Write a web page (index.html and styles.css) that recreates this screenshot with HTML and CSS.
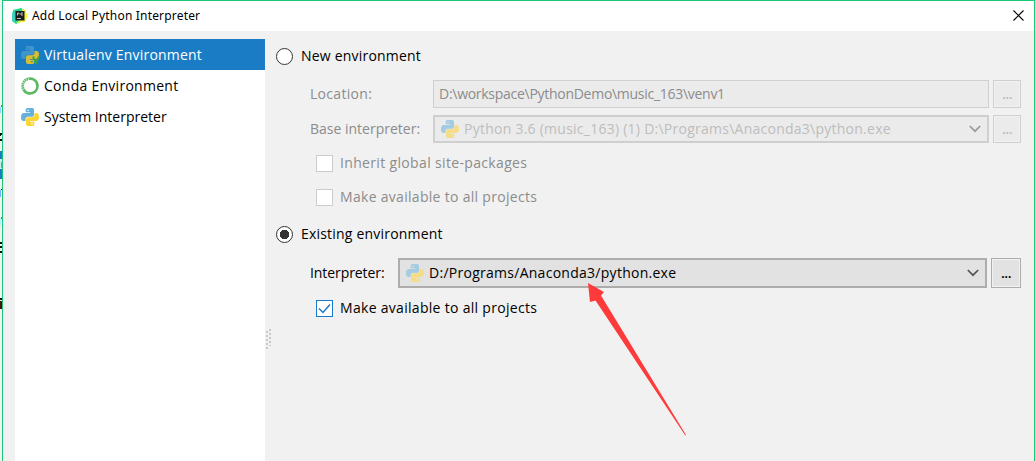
FILE: index.html
```html
<!DOCTYPE html>
<html lang="en">
<head>
<meta charset="utf-8">
<title>Add Local Python Interpreter</title>
<link rel="stylesheet" href="styles.css">
</head>
<body>
<svg class="defs" width="0" height="0" aria-hidden="true">
  <symbol id="python" viewBox="0 0 18 18">
    <path class="py-top" d="M6.2 0h5.1C12.700 0 13 1 13 2.200V6.500C13 8 12 8.800 10.700 8.800H7C5.300 8.800 4.500 9.800 4.500 11v2H2.500C.9 13 0 11.500 0 9.200 0 6.500 1 5 3 5H9V4.300H4.700V2C4.700.7 5.100 0 6.200 0Z"/>
    <path class="py-bottom" d="M11.800 18H6.700C5.300 18 5 17 5 15.800V11.500C5 10 6 9.200 7.300 9.200H11C12.700 9.200 13.500 8.200 13.500 7V5h2C17.100 5 18 6.500 18 8.800 18 11.500 17 13 15 13H9v.7h4.300V16C13.300 17.300 12.900 18 11.800 18Z"/>
    <circle class="py-eye" cx="7" cy="2.300" r=".8"/><circle class="py-eye" cx="11" cy="15.700" r=".8"/>
  </symbol>
  <symbol id="chevron" viewBox="0 0 12 8"><path d="M.8 1L6 6.200 11.200 1" fill="none" stroke="currentColor" stroke-width="1.700"/></symbol>
</svg>
<div class="screen">
  <svg class="backdrop" width="2" height="461" viewBox="0 0 2 461" shape-rendering="crispEdges">
    <path fill="#111" d="M0 133h2v2H0zM0 135h1v1H0zM0 139h2v2H0zM1 189h1v1H1zM0 242h2v2H0zM0 246h2v2H0zM0 251h2v2H0zM0 298h2v2H0z"/>
    <path fill="#1a7cc4" d="M0 151h2v8H0zM0 169h2v10H0z"/><path fill="#d5e6f3" d="M0 159h2v10H0z"/><path fill="#c08080" d="M1 162h1v6H1z"/>
    <path fill="#6eb5ff" d="M0 190h1v7H0z"/><path fill="#8ad4ff" d="M0 107h1v6H0z"/><path fill="#aef3f7" d="M0 218h1v7H0z"/>
    <path fill="#a66a20" d="M1 105h1v2H1zM1 217h1v2H1z"/>
    <path fill="#501010" d="M0 301h2v8H0z"/>
  </svg>
  <div class="dialog">
    <header class="titlebar">
      <svg class="app-icon" width="16" height="16" viewBox="0 0 16 16"><path fill="#21d789" d="M1 2L9 0l5 3-3 10-7 3-4-3z"/><path fill="#fcf84a" d="M10 1l3 1 3 6-3 6-9 1 7-5z"/><path fill="#3fd0c0" d="M0 5l3-2v10H0z"/><path fill="#1b1b1b" d="M3.500 3h9v9.500h-9z"/><path stroke="#bbb" fill="none" d="M5.500 7.500V5h1.500v1.500M11 5H9v2h2M5 10.500h4"/></svg>
      <span class="title">Add Local Python Interpreter</span>
      <svg class="close" width="11" height="11" viewBox="0 0 11 11"><path d="M.5.5l10 10M10.500.5l-10 10" stroke="#000" stroke-width="1.100"/></svg>
    </header>
    <div class="content">
      <nav class="sidebar">
        <div class="item selected"><span class="item-icon"><svg class="py vivid dark" width="18" height="18"><use href="#python"/></svg><svg class="venv" width="8" height="8" viewBox="0 0 8 8"><path d="M1 .5l3 6.500L7 .5" fill="none" stroke="#42a536" stroke-width="1.900"/></svg></span><span class="t-venv">Virtualenv Environment</span></div>
        <div class="item"><svg width="18" height="18" viewBox="0 0 18 18" fill="none" stroke="#5fb865"><path d="M9 1.600A7.400 7.400 0 1 1 2.500 12.500" stroke-width="2.800"/><path d="M9 1.600A7.400 7.400 0 0 0 2.500 12.500" stroke-width="2.800" stroke-dasharray="1.500 .6"/></svg><span class="t-conda">Conda Environment</span></div>
        <div class="item"><svg class="py vivid" width="18" height="18"><use href="#python"/></svg><span class="t-system">System Interpreter</span></div>
      </nav>
      <svg class="grip" width="6" height="20" viewBox="0 0 6 20" fill="#c9c9c9"><path d="M1 2h2v2H1zM1 6h2v2H1zM1 10h2v2H1zM1 14h2v2H1zM1 18h2v2H1zM4 0h2v2H4zM4 4h2v2H4zM4 8h2v2H4zM4 12h2v2H4zM4 16h2v1H4z"/></svg>
      <main class="form">
        <div class="choice"><span class="radio"></span><span class="t-new">New environment</span></div>
        <div class="row location disabled"><span class="label wide"><span class="t-loc">Location:</span></span><div class="input"><span class="t-path">D:\workspace\PythonDemo\music_163\venv1</span></div><div class="browse">...</div></div>
        <div class="row base disabled"><span class="label wide"><span class="t-base">Base interpreter:</span></span><div class="combo"><svg class="py" width="18" height="18"><use href="#python"/></svg><span class="t-py">Python 3.6 (music_163) (1) D:\Programs\Anaconda3\python.exe</span><svg class="arrow" width="12" height="8"><use href="#chevron"/></svg></div><div class="browse">...</div></div>
        <div class="check inherit disabled"><span class="box"></span><span class="t-inherit">Inherit global site-packages</span></div>
        <div class="check share disabled"><span class="box"></span><span class="t-make">Make available to all projects</span></div>
        <div class="choice existing"><span class="radio on"></span><span class="t-exist">Existing environment</span></div>
        <div class="row interp"><span class="label"><span class="t-int">Interpreter:</span></span><div class="combo"><svg class="py" width="18" height="18"><use href="#python"/></svg><span class="t-exe">D:/Programs/Anaconda3/python.exe</span><svg class="arrow" width="12" height="8"><use href="#chevron"/></svg></div><div class="browse">...</div></div>
        <div class="check active"><span class="box"><svg width="13" height="11" viewBox="0 0 13 11"><path d="M1 5.500l4 4L12 1.500" fill="none" stroke="#1979ca" stroke-width="1.500"/></svg></span><span class="t-make">Make available to all projects</span></div>
      </main>
    </div>
  </div>
  <svg class="pointer" width="100" height="155" viewBox="0 0 100 155"><path fill="#ff3a3a" d="M0 0l16 9-3 3.500L98 152l-.7.5L7.500 17.500 2 19z"/></svg>
</div>
</body>
</html>
```
FILE: styles.css
```css
* { box-sizing: border-box; }
body { margin: 0; font: 14px/18px "Open Sans", "Noto Sans", sans-serif; color: #000; background: #f1f1f1; white-space: nowrap; }
.defs { position: absolute; }
.screen { position: relative; display: flex; width: 1035px; height: 461px; overflow: hidden; }
.backdrop { flex: none; }
.dialog { flex: 1; display: flex; flex-direction: column; border: 1px solid #1bc877; border-bottom: 0; }
.titlebar { height: 30px; flex: none; display: flex; align-items: center; padding: 0 9px; background: #fff; font: 12px/16px "Noto Sans", sans-serif; }
.title { margin-left: 4px; letter-spacing: .18px; }
.close { margin-left: auto; margin-right: 1px; margin-top: -2px; }
.content { flex: 1; display: flex; padding-left: 12px; background: #f1f1f1; }
.sidebar { width: 250px; margin-top: 8px; background: #fff; }
.item { height: 31px; display: flex; align-items: center; gap: 5px; padding-left: 6px; }
.item.selected { background: #1a7cc4; color: #fff; }
.item-icon { position: relative; display: flex; }
.venv { position: absolute; right: -1px; bottom: 0; }
.grip { width: 6px; margin-top: 298px; }
.form { flex: 1; padding: 16px 13px 0 5px; }
.py { flex: none; --top: #a3cce2; --bottom: #f5dd88; --eye: #e3e3e3; }
.py.vivid { --top: #65b1d9; --bottom: #fcd535; --eye: #fff; }
.py.dark { --top: #4095cc; --bottom: #d5bd35; --eye: #1a7cc4; }
.py-top { fill: var(--top); }
.py-bottom { fill: var(--bottom); }
.py-eye { fill: var(--eye); }
.choice { height: 18px; display: flex; align-items: center; gap: 8px; }
.existing { margin-top: 19px; }
.radio { width: 17px; height: 17px; border: 1.5px solid #333; border-radius: 50%; background: #fff; }
.radio.on { background: radial-gradient(circle, #333 0 4.500px, #fff 5px); }
.row { display: flex; align-items: center; margin-left: 34px; height: 28px; }
.location { margin-top: 15px; }
.base { margin-top: 7px; }
.interp { height: 30px; margin-top: 15px; }
.label { width: 88px; flex: none; }
.label.wide { width: 123px; }
.input { flex: 1; height: 28px; display: flex; align-items: center; border: 1px solid #cfcfcf; padding-left: 5px; background: #ebebeb; }
.combo { flex: 1; height: 100%; display: flex; align-items: center; gap: 5px; padding: 0 6px; border: 2px solid #adadad; background: #e2e2e2; }
.arrow { margin-left: auto; color: #555; }
.browse { width: 30px; height: 100%; display: flex; align-items: center; justify-content: center; margin-left: 4px; border: 1px solid #adadad; box-shadow: inset 0 0 0 1px #f1f1f1; background: #e2e2e2; font-weight: 600; letter-spacing: -.5px; }
.check { display: flex; align-items: center; gap: 7px; height: 17px; margin-left: 40px; }
.check .t-make, .check .t-inherit { margin-top: -2px; }
.box { display: flex; align-items: center; justify-content: center; width: 17px; height: 17px; border: 1px solid #ccc; background: #fff; }
.inherit, .active { margin-top: 12px; }
.share { margin-top: 17px; }
.active .box { border-color: #1979ca; }
.disabled { color: #8c8c8c; }
.disabled .combo { border-color: #cfcfcf; background: #ebebeb; color: #bdbdbd; }
.disabled .browse { width: 28px; border-color: #cfcfcf; background: #ebebeb; color: #bdbdbd; }
.disabled .arrow { color: #999; }
.t-venv, .t-new, .t-exist { letter-spacing: .2px; }
.t-conda, .t-exe { letter-spacing: .27px; }
.t-loc { letter-spacing: .3px; }
.t-path { letter-spacing: -.28px; }
.t-py { letter-spacing: .25px; }
.t-inherit { letter-spacing: .34px; }
.t-make { letter-spacing: .3px; }
.t-int { letter-spacing: -.08px; }
.pointer { position: absolute; left: 588px; top: 283px; }
```
